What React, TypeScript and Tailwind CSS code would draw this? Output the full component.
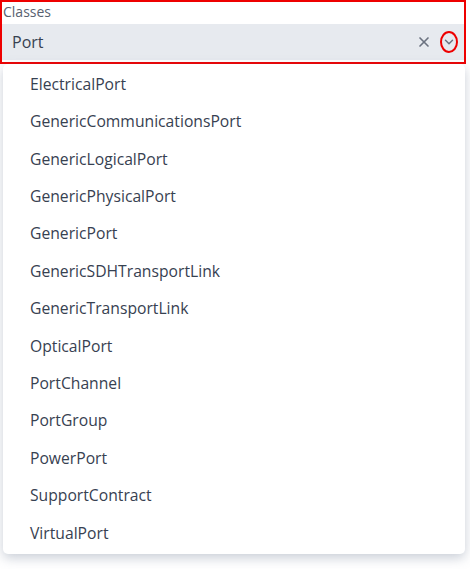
import { X, ChevronDown } from "lucide-react";

const classes = [
  "ElectricalPort",
  "GenericCommunicationsPort",
  "GenericLogicalPort",
  "GenericPhysicalPort",
  "GenericPort",
  "GenericSDHTransportLink",
  "GenericTransportLink",
  "OpticalPort",
  "PortChannel",
  "PortGroup",
  "PowerPort",
  "SupportContract",
  "VirtualPort",
];

export default function App() {
  return (
    <div className="min-h-[569px] w-[470px] bg-white font-['Open_Sans',sans-serif] text-[#374151]">
      {/* Field with highlight frame */}
      <div className="h-[64px] w-[466px] border-2 border-[#ee0000]">
        <div className="h-[22px] pl-[1px] pt-[1px] text-[14px] leading-[18px] text-[#586170]">Classes</div>
        <div className="flex h-[36px] items-center bg-[#e7eaef] pl-[10px] pr-[6px]">
          <span className="flex-1 text-[16px]">Port</span>
          <X className="mr-[8px] h-[16px] w-[16px] text-[#6b7280]" strokeWidth={2.5} />
          <span className="flex h-[22px] w-[18px] items-center justify-center rounded-[50%] border-2 border-[#ee0000]">
            <ChevronDown className="h-[14px] w-[14px] text-[#6b7280]" strokeWidth={2.5} />
          </span>
        </div>
      </div>

      {/* Options menu */}
      <div className="ml-[3px] w-[462px] rounded-[5px] bg-white py-[2px] shadow-[0_4px_12px_rgba(100,116,139,0.35)]">
        {classes.map((c) => (
          <div key={c} className="flex h-[37.4px] items-center pl-[27px] text-[15.7px]">
            {c}
          </div>
        ))}
      </div>
    </div>
  );
}
